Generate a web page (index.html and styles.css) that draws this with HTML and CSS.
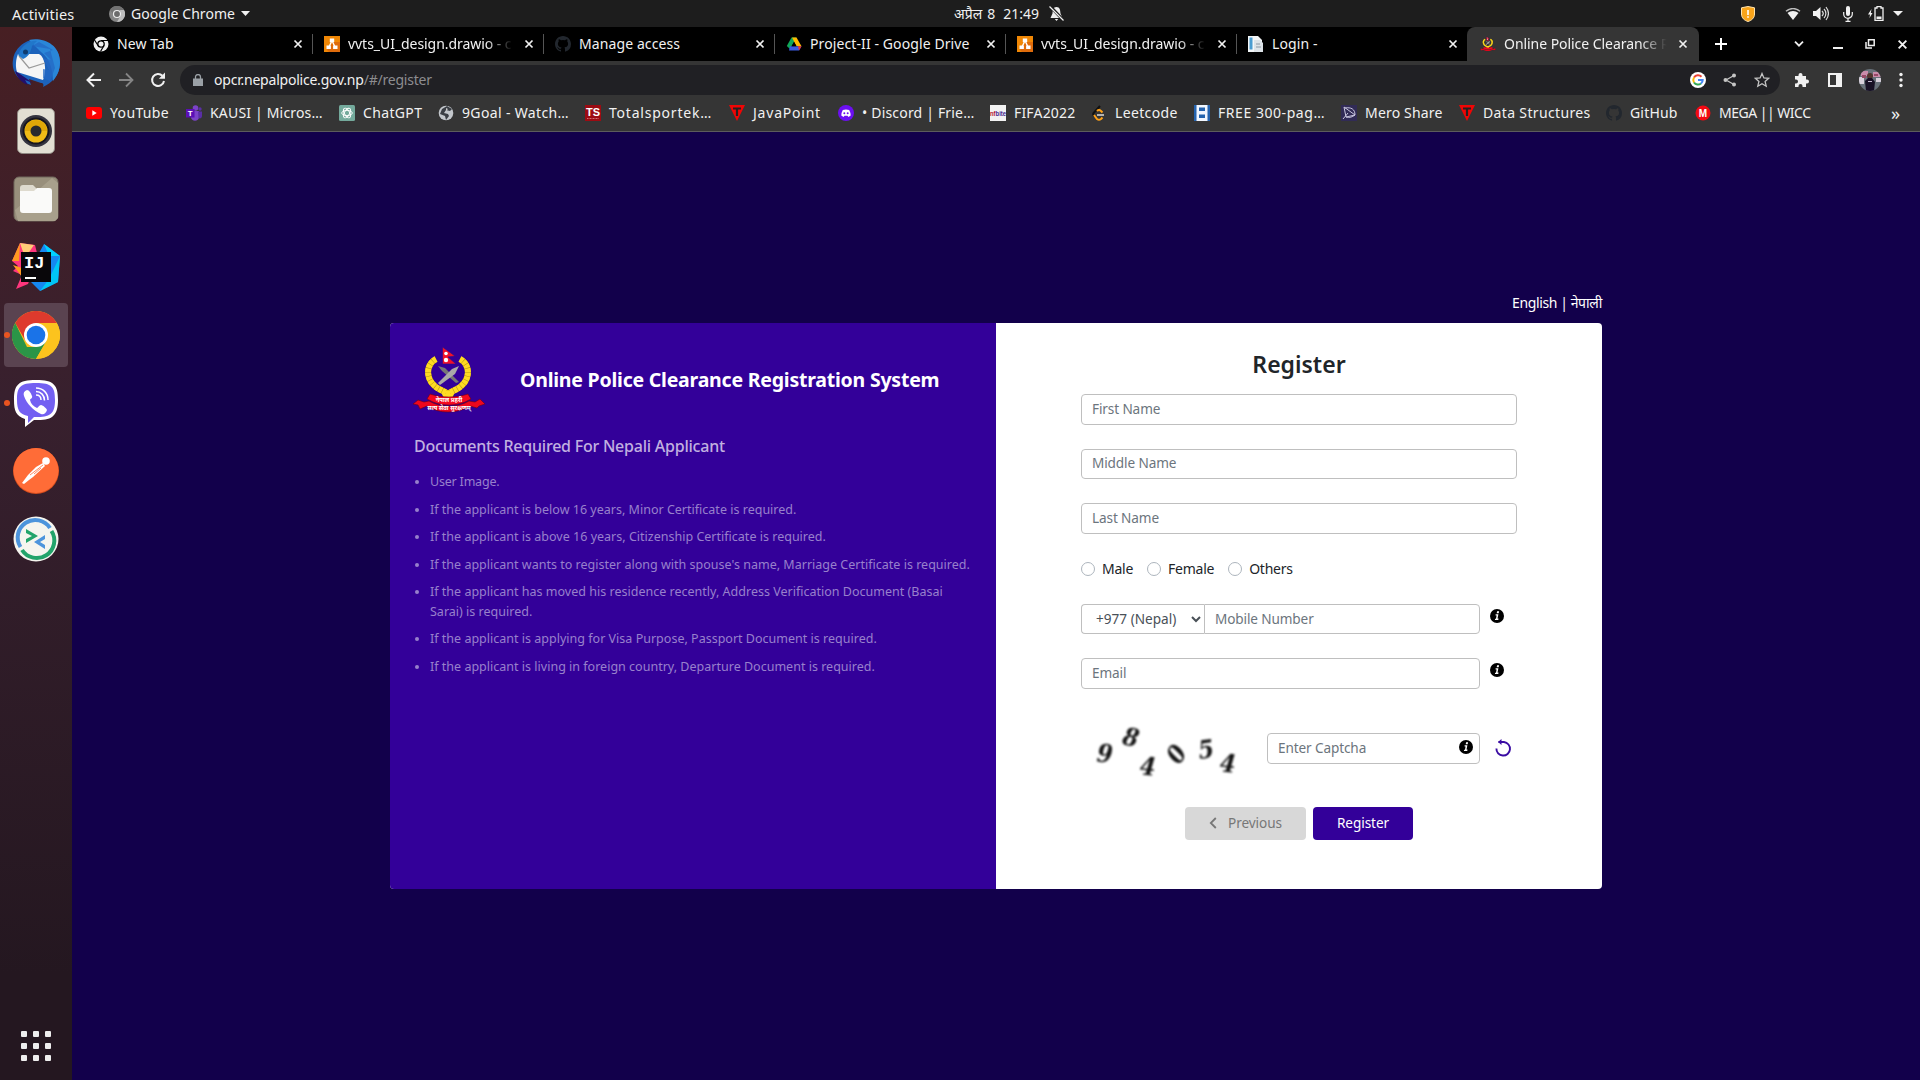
FILE: index.html
```html
<!DOCTYPE html>
<html lang="en">
<head>
<meta charset="utf-8">
<title>Online Police Clearance Registration System</title>
<link rel="stylesheet" href="styles.css">
</head>
<body>
<svg class="defs" width="0" height="0" aria-hidden="true">
  <symbol id="x" viewBox="0 0 10 10"><path d="M1.5 1.5l7 7M8.500 1.500l-7 7" stroke="#f1f1f1" stroke-width="1.700" fill="none"/></symbol>
  <symbol id="drawio" viewBox="0 0 16 16"><path fill="#f08705" d="M0 0h16v16H0z"/><path fill="#df6c0c" d="M16 6v10H5l-2-2 6-8z"/><path d="M8 4.500L5 11M8 4.500L11 11" stroke="#fff" stroke-width="1.400"/><path fill="#fff" d="M5.800 2.500h4.400v3.500H5.800zM2.500 9.500h4.400V13H2.500zM9.100 9.500h4.400V13H9.100z"/></symbol>
  <symbol id="github" viewBox="0 0 16 16"><path fill="#22272e" d="M8 0C3.580 0 0 3.580 0 8c0 3.540 2.290 6.530 5.470 7.590.4.070.550-.170.550-.380v-1.340c-2.230.480-2.700-1.070-2.700-1.070-.360-.930-.890-1.170-.890-1.170-.730-.500.050-.490.050-.490.800.060 1.230.830 1.230.830.710 1.220 1.870.870 2.330.660.070-.520.280-.870.500-1.070-1.780-.200-3.640-.890-3.640-3.950 0-.870.310-1.590.820-2.150-.080-.200-.360-1.020.080-2.120 0 0 .670-.210 2.200.820a7.600 7.600 0 014 0c1.530-1.040 2.200-.820 2.200-.820.440 1.100.160 1.920.080 2.120.510.560.820 1.270.820 2.150 0 3.070-1.870 3.750-3.650 3.950.290.250.540.730.540 1.480v2.190c0 .210.150.460.550.380A8 8 0 0016 8c0-4.420-3.580-8-8-8z"/></symbol>
  <symbol id="tpoint" viewBox="0 0 16 16"><path fill="#f00505" d="M0 0h16L8 16z"/><path fill="#222" d="M4 2.500h8v2H9.100V11H6.900V4.500H4z"/></symbol>
  <symbol id="info" viewBox="0 0 14 14"><circle cx="7" cy="7" r="7"/><path fill="#fff" d="M7.100 2.300h2l-.4 1.900h-2zM5.600 5.300h2.800l-.9 4.300h1l-.2 1.300H4.900l.2-1.200h.9l.600-3.200h-1z"/></symbol>
  <symbol id="emblem" viewBox="0 0 72 66">
    <path d="M23 12C12 18 12 34 26 42L40 49M47 12C58 18 58 34 44 42L30 49" fill="none" stroke="#b5960f" stroke-width="6"/>
    <path d="M23 12C12 18 12 34 26 42L40 49M47 12C58 18 58 34 44 42L30 49" fill="none" stroke="#ffdb22" stroke-width="6" stroke-dasharray="3.600 .5"/>
    <path d="M25 19l7 2 14 14-3 1-14-12z" fill="#777"/><path d="M46 19l-7 3-14 14 2 2 15-11z" fill="#aaa9a9"/>
    <path d="M29.500 0L42 9l-7 1 8 7H29.500z" fill="#f3102a" stroke="#25108a" stroke-width=".6"/><circle cx="33" cy="6.500" r="1.800" fill="#fff"/><circle cx="33" cy="13" r="2.200" fill="#fff"/>
    <path d="M0 57l5-4 6 2 5-1c12 7 28 7 40 0l6 1 5-3 5 5-6 2-2 2-7-2c-13 8-31 8-43 0l-7 3-2-4z" fill="#ee071d" stroke="#65001b" stroke-width=".6"/>
    <path d="M14 52l3-5c12 4 26 4 38 0l3 5-6 3c-10 4-22 4-32 0z" fill="#f5091f" stroke="#65001b" stroke-width=".6"/>
  </symbol>
</svg>

<header class="topbar">
  <span class="activities">Activities</span>
  <div class="appmenu">
    <svg width="16" height="16" viewBox="0 0 16 16"><circle cx="8" cy="8" r="8" fill="#858585"/><path d="M8 0a8 8 0 017 4H8L4 8 1 4a8 8 0 017-4z" fill="#737373"/><path d="M15 4a8 8 0 01-7 12l4-7-1-5z" fill="#bdbdbd"/><circle cx="8" cy="8" r="3.500" fill="#6b6b6b" stroke="#eee" stroke-width="1.200"/></svg>
    <span>Google Chrome</span>
    <svg width="9" height="5" viewBox="0 0 9 5"><path d="M0 0h9L4.500 5z" fill="#f1f1f1"/></svg>
  </div>
  <div class="clock"><span class="month">अप्रैल</span><span>8</span><span>21:49</span>
    <svg width="15" height="15" viewBox="0 0 15 15"><path d="M7.500 1C4 1 3.800 4 3.500 7.500L1.500 12h12l-2-4.500C11.200 4 11 1 7.500 1zM5.800 13h3.400L7.500 15z" fill="#eee"/><path d="M1 0l14 15" stroke="#1d1d1d" stroke-width="3"/><path d="M.5.500l14 14" stroke="#eee" stroke-width="1.200"/></svg>
  </div>
  <div class="tray">
    <svg class="shield" width="14" height="16" viewBox="0 0 14 16"><path d="M7 .5l6.500 1.300V8c0 4-3 6.500-6.500 7.500C3.500 14.500.5 12 .5 8V1.800z" fill="#f9a41a" stroke="#ffe4af"/><path d="M6.200 4h1.600v5H6.200zM6.200 10.300h1.600v1.500H6.200z" fill="#fff"/></svg>
    <svg class="wifi" width="16" height="12" viewBox="0 0 16 12"><path d="M1 3.300c4-3.600 10-3.600 14 0" fill="none" stroke="#bbb" stroke-width="1.500"/><path d="M2.500 5c3-2.700 8-2.700 11 0L8 12z" fill="#f1f1f1"/></svg>
    <svg class="sound" width="16" height="15" viewBox="0 0 16 15"><path d="M0 5h3l4.500-4v13L3 10H0z" fill="#f1f1f1"/><path d="M9 5c1.500 1.500 1.500 3.500 0 5M11 3c2.500 2.500 2.500 6.500 0 9M13 1c3 4 3 9 0 13" fill="none" stroke="#ddd" stroke-width="1.200"/></svg>
    <svg class="mic" width="10" height="16" viewBox="0 0 10 16"><rect x="3" y="0" width="4" height="10" rx="2" fill="#f1f1f1"/><path d="M.7 6v2a4.300 4.300 0 008.600 0V6M5 12v3M2.500 15.300h5" fill="none" stroke="#f1f1f1" stroke-width="1.200"/></svg>
    <svg class="batt" width="16" height="15" viewBox="0 0 16 15"><path d="M3.500 3L0 8.500h2L1.500 12 4.500 7H2.800z" fill="#f1f1f1"/><path d="M7 2h2V.7h4V2h2v12.300H7z" fill="none" stroke="#f1f1f1" stroke-width="1.300"/><path d="M8.500 10.500h5V13h-5z" fill="#f1f1f1"/></svg>
    <svg width="10" height="5" viewBox="0 0 10 5"><path d="M0 0h10L5 5z" fill="#f1f1f1"/></svg>
  </div>
</header>

<div class="desktop">
<nav class="dock">
  <div class="app"><svg width="48" height="48" viewBox="0 0 48 48"><path d="M14 3C24-2 48 2 48 24c0 12-8 20-17 24 1-3 0-4-2-4l-12-4 2 6C6 42-1 32 1 21 2 12 8 6 14 3z" fill="#1c62bb"/><path d="M17 1c12-3 31 3 31 22 0 8-3 14-7 19 0-8-2-22-12-29z" fill="#2a86d8"/><path d="M3 32c2 7 7 12 13 14l-3-5 8 3-16-11z" fill="#22106b"/><path d="M6 15h21c6 3 8 17 4 26L5 33C3 27 4 20 6 15z" fill="#f5f5f5"/><path d="M7 17l10 12 16-5" fill="none" stroke="#999" stroke-width="1.200"/><path d="M6 16C10 6 18 1 25 2l-5 5c-1 5-3 11-9 13z" fill="#2177ca"/><path d="M20 7l7-4 14 8-9 3 7 7-8-2 6 12-6-1 0 9 7 3 5-13-5-19z" fill="#2468c4" opacity=".75"/><circle cx="13.500" cy="13" r="2.500" fill="#103d70"/></svg></div>
  <div class="app"><svg width="48" height="48" viewBox="0 0 48 48"><rect x="5.500" y="1.500" width="37" height="45" rx="5" fill="#e2dfd3" stroke="#8f8982"/><circle cx="24" cy="24" r="16" fill="#34343f"/><circle cx="24" cy="24" r="13.500" fill="#16161f"/><circle cx="24" cy="24" r="11.500" fill="#efbb16"/><path d="M13 24a11 11 0 0122 0z" fill="#dea708"/><circle cx="24" cy="24" r="5.500" fill="#282b2e"/></svg></div>
  <div class="app"><svg width="48" height="48" viewBox="0 0 48 48"><rect x="2" y="2" width="44" height="44" rx="5" fill="#988f7c" stroke="#71685d"/><path d="M3 35L40 3l6 5v35l-3 3H6z" fill="#a8a08c"/><path d="M8 16v-3q0-3 3-3h10l4 4v6H8z" fill="#dedace"/><path d="M8 16h14l3-3h12q3 0 3 3v19q0 3-3 3H11q-3 0-3-3z" fill="#fafaf9"/></svg></div>
  <div class="app"><svg width="48" height="48" viewBox="0 0 48 48"><path d="M0 18L8 0l15 2 3 12-10 27-12 5 6-14-9-4 5-5z" fill="#ff367d"/><path d="M8 0l-1 18-7 0zM1 22l9 3v9z" fill="#ff9a20"/><path d="M8 0l14 2-9 13z" fill="#ffcc77"/><path d="M27 10l5-9 16 12-2 26-18 9-9-9z" fill="#1588f1"/><path d="M32 1l5 12 11 0z" fill="#00d2ff"/><path d="M37 36l11-23-2 26-18 9z" fill="#00c6f5"/><path d="M9 9h30v30H9zM13 34" fill="#09070a"/><path d="M13 34h11v2H13z" fill="#fff"/><text x="12" y="25" class="ij">IJ</text></svg></div>
  <div class="app running active"><svg width="48" height="48" viewBox="0 0 48 48"><circle cx="24" cy="24" r="24" fill="#fcc31e"/><path d="M3.200 12A24 24 0 0144.800 12H24L13.600 30z" fill="#de3a2d"/><path d="M3.200 12A24 24 0 0024 48l10.400-18L24 36H15z" fill="#2b9547"/><path d="M24 12h20.800A24 24 0 0124 48l10.400-18z" fill="#fcc31e"/><circle cx="24" cy="24" r="12" fill="#fff"/><circle cx="24" cy="24" r="9.300" fill="#1a73e8"/></svg></div>
  <div class="app running"><svg width="48" height="48" viewBox="0 0 48 48"><path d="M24 1C6 1 2 6 2 21c0 11 2 16 11 19v8l9-7c18 1 24-4 24-20C46 6 42 1 24 1z" fill="#fff"/><path d="M24 4C8 4 5 8 5 21c0 11 3 14 11 16v7l6-6c17 1 21-4 21-17C43 8 40 4 24 4z" fill="#7360f2"/><path d="M15 11c-3 1-4 3-3 6 3 8 9 14 17 18 3 1 5-1 6-4 0-1-4-5-6-5s-3 3-4 3c-4-2-6-4-7-8 0-1 3-2 2-4-1-3-3-6-5-6z" fill="#fff"/><path d="M24 16c3 0 5 2 5 5M24 12.500c5 0 8.500 4 8.500 9M24 9c7 0 12 5 12 12" fill="none" stroke="#fff" stroke-width="1.500"/></svg></div>
  <div class="app"><svg width="48" height="48" viewBox="0 0 48 48"><circle cx="24" cy="24" r="23" fill="#d64d1d"/><circle cx="24" cy="23.500" r="22.500" fill="#ff6c37"/><circle cx="34" cy="14" r="3.800" fill="#fff"/><path d="M31 16l2 3-12 11-4 3-5 4-2-1 6-8 8-8z" fill="#fff"/><path d="M18 28l13-10M22 27l7-6" stroke="#ff6c37" stroke-width=".8"/></svg></div>
  <div class="app"><svg width="48" height="48" viewBox="0 0 48 48"><circle cx="24" cy="24" r="22.500" fill="#f5f5ef"/><path d="M8.500 32A17.500 17.500 0 0138 13" fill="none" stroke="#4c94dc" stroke-width="4"/><path d="M39.500 16A17.500 17.500 0 0110 35" fill="none" stroke="#22a46b" stroke-width="4"/><path d="M14 14l12 7-12 7v-4l6-3-6-3z" fill="#22a46b"/><path d="M33 20v4l-5 3 5 3v4l-11-7z" fill="#4c94dc"/></svg></div>
  <div class="apps"><i></i><i></i><i></i><i></i><i></i><i></i><i></i><i></i><i></i></div>
</nav>

<div class="browser">
  <div class="tabs">
    <div class="tab"><svg width="16" height="16" viewBox="0 0 16 16"><circle cx="8" cy="8" r="7.500" fill="#f1f1f1"/><circle cx="8" cy="8" r="3.200" fill="#f1f1f1" stroke="#000" stroke-width="1.300"/><path d="M8 4.500h7M5 9.500L1.500 4M11 9.500L7.500 15.500" stroke="#000" stroke-width="1.200"/></svg><span class="tt">New Tab</span><svg class="cl" width="10" height="10"><use href="#x"/></svg></div>
    <div class="tab"><svg width="16" height="16"><use href="#drawio"/></svg><span class="tt fade">vvts_UI_design.drawio - c</span><svg class="cl" width="10" height="10"><use href="#x"/></svg></div>
    <div class="tab"><svg width="16" height="16"><use href="#github"/></svg><span class="tt">Manage access</span><svg class="cl" width="10" height="10"><use href="#x"/></svg></div>
    <div class="tab"><svg width="16" height="16" viewBox="0 0 16 16"><path fill="#10a758" d="M5.500 1.500h5L4 13 .8 10z"/><path fill="#ffba00" d="M6 1.500h4.500l5 8.800h-5z"/><path fill="#3b5be0" d="M4 10.300h11.500L13 14.500H3z"/><path fill="#e33" d="M12 10.300h3.500L13 14.500z"/><path d="M8 6l2.500 4.300h-5z"/></svg><span class="tt">Project-II - Google Drive</span><svg class="cl" width="10" height="10"><use href="#x"/></svg></div>
    <div class="tab"><svg width="16" height="16"><use href="#drawio"/></svg><span class="tt fade">vvts_UI_design.drawio - c</span><svg class="cl" width="10" height="10"><use href="#x"/></svg></div>
    <div class="tab"><svg width="16" height="16" viewBox="0 0 16 16"><path fill="#f3f6f8" d="M0 0h10l4 4v12H0z"/><path fill="#4a9cd0" d="M1.500 1.500h3v12h-3z"/><path fill="#dde3e8" d="M6 4h6l3 3v9H6z"/><path d="M8 8h4M8 11h5" stroke="#8a98a4"/></svg><span class="tt">Login -</span><svg class="cl" width="10" height="10"><use href="#x"/></svg></div>
    <div class="tab current"><svg width="16" height="16"><use href="#emblem"/></svg><span class="tt fade">Online Police Clearance R</span><svg class="cl" width="10" height="10"><use href="#x"/></svg></div>
    <svg class="plus" width="12" height="12" viewBox="0 0 12 12"><path d="M6 0v12M0 6h12" stroke="#fff" stroke-width="2"/></svg>
    <div class="win">
      <svg width="10" height="6" viewBox="0 0 10 6"><path d="M1 .7l4 4 4-4" stroke="#eee" stroke-width="1.800" fill="none"/></svg>
      <svg class="min" width="10" height="10" viewBox="0 0 10 10"><path d="M0 9h10" stroke="#eee" stroke-width="2"/></svg>
      <svg class="max" width="10" height="10" viewBox="0 0 10 10"><path d="M3.500.8h5.700v5.700H3.500zM1 3v6h6" stroke="#eee" stroke-width="1.500" fill="none"/></svg>
      <svg width="11" height="11"><use href="#x"/></svg>
    </div>
  </div>

  <div class="toolbar">
    <div class="navs">
      <svg width="16" height="16" viewBox="0 0 16 16"><path d="M15 8H2M8 1.500L1.500 8 8 14.500" stroke="#f1f1f1" stroke-width="2" fill="none"/></svg>
      <svg width="16" height="16" viewBox="0 0 16 16"><path d="M1 8h13M8 1.500L14.500 8 8 14.500" stroke="#858585" stroke-width="1.800" fill="none"/></svg>
      <svg width="16" height="16" viewBox="0 0 16 16"><path d="M14 9a6 6 0 11-1.600-5.200" stroke="#f1f1f1" stroke-width="2" fill="none"/><path d="M15 .5v6.200H8.800z" fill="#f1f1f1"/></svg>
    </div>
    <div class="omni">
      <svg class="lock" width="10" height="12" viewBox="0 0 10 12"><path d="M0 4.500h10V12H0z" fill="#9aa0a6"/><path d="M2.500 5V3a2.500 2.500 0 015 0v2" stroke="#9aa0a6" stroke-width="1.300" fill="none"/></svg>
      <span class="url"><b>opcr.nepalpolice.gov.np</b>/#/register</span>
      <svg width="16" height="16" viewBox="0 0 16 16"><circle cx="8" cy="8" r="8" fill="#fff"/><g fill="none" stroke-width="2"><path d="M11.500 4.700A4.800 4.800 0 004 5.500" stroke="#ea4335"/><path d="M4 5.500a4.800 4.800 0 000 5" stroke="#fbbc05"/><path d="M4 10.500a4.800 4.800 0 007 1" stroke="#34a853"/><path d="M11 11.500A4.500 4.500 0 0012.700 8H8" stroke="#4285f4"/></g></svg>
      <svg width="14" height="14" viewBox="0 0 14 14"><path d="M11 2.500L3 7l8 4.500" stroke="#c4c4c4" stroke-width="1.300" fill="none"/><circle cx="11" cy="2.500" r="2" fill="#c4c4c4"/><circle cx="2.500" cy="7" r="2" fill="#c4c4c4"/><circle cx="11" cy="11.500" r="2" fill="#c4c4c4"/></svg>
      <svg width="16" height="16" viewBox="0 0 16 16"><path d="M8 1.500l1.900 4.400 4.800.4-3.600 3.200 1.100 4.700L8 11.700l-4.200 2.500 1.100-4.700L1.300 6.300l4.800-.4z" stroke="#c4c4c4" stroke-width="1.300" fill="none"/></svg>
    </div>
    <div class="exts">
      <svg width="16" height="16" viewBox="0 0 16 16"><path d="M1 4h3.500V3a2 2 0 014 0v1H12v3.500h1a2 2 0 010 4h-1V15H8.500v-1a2 2 0 00-4 0v1H1v-3.500h1a2 2 0 000-4H1z" fill="#f1f1f1"/></svg>
      <svg width="14" height="14" viewBox="0 0 14 14"><path d="M1 1h12v12H1z" fill="none" stroke="#f1f1f1" stroke-width="2"/><path d="M8 1h5v12H8z" fill="#f1f1f1"/></svg>
      <svg width="22" height="22" viewBox="0 0 22 22"><clipPath id="av"><circle cx="11" cy="11" r="11"/></clipPath><g clip-path="url(#av)"><path fill="#68717a" d="M0 0h22v22H0z"/><path fill="#c98cab" d="M2 2h7v5H2zM14 3h8v5h-8z"/><path fill="#d8d1dc" d="M0 8h5v7H0zM17 9h5v4h-5z"/><path fill="#974968" d="M3 6h4v3H3zM15 5h4v2h-4z"/><circle cx="11" cy="7" r="3" fill="#51352e"/><path d="M6 12l3-3h4l3 4-1 9H7z" fill="#171024"/><path d="M9 12h4v1H9z" fill="#c5b8d0"/></g></svg>
      <svg width="4" height="16" viewBox="0 0 4 16"><circle cx="2" cy="2.500" r="1.700" fill="#f1f1f1"/><circle cx="2" cy="8" r="1.700" fill="#f1f1f1"/><circle cx="2" cy="13.500" r="1.700" fill="#f1f1f1"/></svg>
    </div>
  </div>

  <div class="marks">
    <a><svg width="16" height="16" viewBox="0 0 16 16"><rect y="2" width="16" height="12" rx="3" fill="#f00"/><path d="M6.300 5.300v5.400L10.700 8z" fill="#fff"/></svg><span>YouTube</span></a>
    <a class="snug"><svg width="16" height="16" viewBox="0 0 16 16"><circle cx="9.500" cy="3" r="2.800" fill="#7b42c8"/><circle cx="14" cy="4" r="1.700" fill="#5a2ea6"/><path d="M5 6h8v6c0 5-8 5-8 0z" fill="#7b42c8"/><path d="M12 6.500h4V11c0 2-2 3-3.500 2z" fill="#5a2ea6"/><path d="M0 4h8.500v8.500H0z" fill="#5b0fb5"/><text x="4.300" y="11" text-anchor="middle" class="teams">T</text></svg><span>KAUSI | Micros…</span></a>
    <a><svg width="16" height="16" viewBox="0 0 16 16"><rect width="16" height="16" rx="1.500" fill="#74aa9c"/><g fill="none" stroke="#fff" stroke-width=".9"><ellipse cx="8" cy="8" rx="5.300" ry="2.600"/><ellipse cx="8" cy="8" rx="5.300" ry="2.600" transform="rotate(60 8 8)"/><ellipse cx="8" cy="8" rx="5.300" ry="2.600" transform="rotate(120 8 8)"/></g></svg><span>ChatGPT</span></a>
    <a><svg width="16" height="16" viewBox="0 0 16 16"><circle cx="8" cy="8" r="7.300" fill="#c3c7cc"/><path d="M9 1l5 3-2 2-4-1-2 3 4 1 1 2-3 4-1-4-5-2 2-5z" fill="#3b3f45"/><path d="M8 3l2 1-2 2z" fill="#ccc"/></svg><span>9Goal - Watch…</span></a>
    <a class="loose"><svg width="16" height="16" viewBox="0 0 16 16"><path fill="#9c0b12" d="M0 0h16v16H0z"/><text x="8" y="11" text-anchor="middle" class="ts">TS</text><path d="M2 13.500h12" stroke="#d6696d" stroke-dasharray="1 .5"/></svg><span>Totalsportek…</span></a>
    <a class="loose"><svg width="16" height="16"><use href="#tpoint"/></svg><span>JavaPoint</span></a>
    <a class="snug"><svg width="16" height="16" viewBox="0 0 16 16"><circle cx="8" cy="8" r="8" fill="#6c0ff2"/><path d="M4.800 5q3.200-1 6.400 0 1.600 3 1.500 5.500L10.500 12l-1-1.200h-3L5.500 12l-2.200-1.500Q3.200 8 4.800 5z" fill="#fff"/><circle cx="6.300" cy="8.300" r="1" fill="#6c0ff2"/><circle cx="9.700" cy="8.300" r="1" fill="#6c0ff2"/></svg><span>• Discord | Frie…</span></a>
    <a class="snug"><svg width="16" height="16" viewBox="0 0 16 16"><path fill="#f2f2f2" d="M0 0h16v16H0z"/><text x="0" y="10.500" textLength="16" lengthAdjust="spacingAndGlyphs" class="nf"><tspan fill="#b3122f">nf</tspan><tspan fill="#43258c">bite</tspan></text></svg><span>FIFA2022</span></a>
    <a><svg width="16" height="16" viewBox="0 0 16 16"><path d="M9 1L3 7.500q-1.500 1.500 0 3.500" stroke="#111" stroke-width="2" fill="none"/><path d="M3 10l3 4q2 1.500 4 0l1.500-1.500M6 6q2-2 4 0l1.500 1.500" stroke="#ffa116" stroke-width="2" fill="none"/><path d="M6 10h7" stroke="#b3b3b3" stroke-width="2"/></svg><span>Leetcode</span></a>
    <a class="wide"><svg width="16" height="16" viewBox="0 0 16 16"><path fill="#f2f7ff" d="M0 0h16v16H0z"/><path fill="#2463ae" d="M0 0h2.500v16H0zM13.500 0H16v16h-2.500zM5 2.500h6v3.500H5zM5 9.500h6v3.500H5z"/></svg><span>FREE 300-pag…</span></a>
    <a class="snug"><svg width="16" height="16" viewBox="0 0 16 16"><path fill="#312b56" d="M0 0h16v16H0z"/><path d="M3 2l11 8-9 2zM2 14l5-6M4 3c6-1 10 1 10 7M5 12c4 1 6 0 9-2" fill="none" stroke="#c8c5de"/></svg><span>Mero Share</span></a>
    <a><svg width="16" height="16"><use href="#tpoint"/></svg><span>Data Structures</span></a>
    <a class="snug"><svg width="16" height="16"><use href="#github"/></svg><span>GitHub</span></a>
    <a class="tight"><svg width="16" height="16" viewBox="0 0 16 16"><circle cx="8" cy="8" r="7.500" fill="#f20a13"/><text x="8" y="11.500" text-anchor="middle" class="mega">M</text></svg><span>MEGA || WICC</span></a>
    <span class="more">»</span>
  </div>

  <main class="page">
    <div class="wrap">
      <div class="lang">English | नेपाली</div>
      <div class="panel">
        <section class="docs">
          <div class="brand">
            <svg width="72" height="66" viewBox="0 0 72 66"><use href="#emblem"/><text x="36" y="55" text-anchor="middle" class="ribbon">नेपाल प्रहरी</text><text x="36" y="63" text-anchor="middle" class="ribbon">सत्य सेवा सुरक्षणम्</text></svg>
            <h1>Online Police Clearance Registration System</h1>
          </div>
          <h2>Documents Required For Nepali Applicant</h2>
          <ul>
            <li>User Image.</li>
            <li>If the applicant is below 16 years, Minor Certificate is required.</li>
            <li>If the applicant is above 16 years, Citizenship Certificate is required.</li>
            <li>If the applicant wants to register along with spouse's name, Marriage Certificate is required.</li>
            <li>If the applicant has moved his residence recently, Address Verification Document (Basai<br>Sarai) is required.</li>
            <li>If the applicant is applying for Visa Purpose, Passport Document is required.</li>
            <li>If the applicant is living in foreign country, Departure Document is required.</li>
          </ul>
        </section>
        <form class="form">
          <h3>Register</h3>
          <input class="field" placeholder="First Name">
          <input class="field" placeholder="Middle Name">
          <input class="field" placeholder="Last Name">
          <div class="radios">
            <label><input type="radio" name="gender">Male</label>
            <label><input type="radio" name="gender">Female</label>
            <label><input type="radio" name="gender">Others</label>
          </div>
          <div class="row">
            <div class="phone"><select class="code"><option>+977 (Nepal)</option></select><input class="field" placeholder="Mobile Number"></div>
            <svg class="hint" width="14" height="14"><use href="#info"/></svg>
          </div>
          <div class="row"><input class="field" placeholder="Email"><svg class="hint" width="14" height="14"><use href="#info"/></svg></div>
          <div class="row captcha">
            <svg class="digits" width="186" height="64" viewBox="0 0 186 64">
              <text x="24" y="46" transform="rotate(6 24 37)">9</text><text x="50" y="30" transform="rotate(14 50 21)">8</text><text x="67" y="59" transform="rotate(6 67 50)">4</text><text x="95" y="47" transform="rotate(-55 95 38)">0</text><text x="125" y="42" transform="rotate(-8 125 33)">5</text><text x="147" y="56" transform="rotate(6 147 47)">4</text>
            </svg>
            <div class="capfield"><input class="field" placeholder="Enter Captcha"><svg class="inside" width="14" height="14"><use href="#info"/></svg></div>
            <svg class="reload" width="17" height="18" viewBox="0 0 17 18"><path d="M3.500 3H9a6.800 6.800 0 11-7.600 6.500" fill="none" stroke="#3a0ca3" stroke-width="1.900"/><path d="M6.500 0v6L3 3z" fill="#3a0ca3"/></svg>
          </div>
          <div class="actions">
            <button type="button" class="prev" disabled><svg width="8" height="12" viewBox="0 0 8 12"><path d="M6.800 1L1.800 6l5 5" stroke="#777" stroke-width="1.800" fill="none"/></svg><span>Previous</span></button>
            <button type="button" class="go"><span>Register</span></button>
          </div>
        </form>
      </div>
    </div>
  </main>
</div>
</div>
</body>
</html>
```
FILE: styles.css
```css
* { box-sizing: border-box; }
body { margin: 0; width: 1920px; height: 1080px; overflow: hidden; font: 14px/20px "Noto Sans", "Open Sans", sans-serif; color: #f1f1f1; background: #12004b; }
svg { display: block; flex: none; }
.defs { position: absolute; }
.ribbon { font: bold 6px/1 "Noto Sans", sans-serif; fill: #fff; letter-spacing: 0; }
.ts { font: bold 11px "Liberation Sans", sans-serif; fill: #fff; letter-spacing: 0; }
.nf { font: bold 8px "Liberation Sans", sans-serif; letter-spacing: 0; }
.teams { font: bold 8px "Liberation Sans", sans-serif; fill: #fff; letter-spacing: 0; }
.mega { font: bold 10px "Liberation Sans", sans-serif; fill: #fff; letter-spacing: 0; }
.ij { font: bold 17px "Liberation Mono", monospace; fill: #fff; }

.topbar { height: 27px; background: #1d1d1d; display: grid; grid-template-columns: 109px 845px 787px 1fr; align-items: center; line-height: 26px; }
.activities { padding-left: 12px; font-size: 14.500px; letter-spacing: .2px; }
.appmenu, .clock, .tray { display: flex; align-items: center; }
.appmenu { gap: 6px; letter-spacing: .05px; }
.clock { gap: 8px; }
.month { margin-right: -3px; }
.clock svg { margin-left: 2px; }
.wifi { margin-left: 30px; }
.sound { margin-left: 12px; }
.mic { margin-left: 14px; }
.batt { margin: 0 9px 0 15px; }

.desktop { display: flex; height: 1053px; }
.dock { width: 72px; display: flex; flex-direction: column; align-items: center; gap: 4px; padding: 4px 0 19px; background: linear-gradient(#471f23, #38202e 35%, #241720 90%); }
.app { width: 64px; height: 64px; border-radius: 4px; display: grid; place-items: center; position: relative; }
.app.active { background: #5a4350; }
.running::before { content: ""; position: absolute; left: 0; top: 29px; width: 6px; height: 6px; border-radius: 50%; background: #e95420; }
.apps { margin-top: auto; display: grid; grid-template-columns: repeat(3, 6px); gap: 6px; }
.apps i { height: 6px; border-radius: 1px; background: #eee; }

.browser { flex: 1; display: flex; flex-direction: column; }
.tabs { height: 34px; background: #000; display: flex; align-items: center; padding: 0 12px 0 9px; }
.tab { width: 231px; height: 34px; display: flex; align-items: center; gap: 8px; padding: 0 10px 0 12px; }
.tab::after { content: ""; width: 1px; height: 20px; background: #555; margin-right: -11px; margin-left: 1px; }
.tab:nth-child(6)::after, .current::after { background: none; }
.tt { flex: 1; overflow: hidden; white-space: nowrap; letter-spacing: .1px; }
.fade { letter-spacing: -.05px; -webkit-mask-image: linear-gradient(90deg, #000 82%, transparent 98%); mask-image: linear-gradient(90deg, #000 82%, transparent 98%); }
.current { background: #353535; border-radius: 8px 8px 0 0; width: 232px; padding-left: 13px; padding-right: 12px; }
.plus { margin-left: 16px; }
.win { margin-left: auto; display: flex; align-items: center; }
.min { margin-left: 29px; }
.max { margin: 0 22px; }

.toolbar { height: 38px; background: #353535; display: flex; align-items: center; }
.navs { display: flex; gap: 16px; padding-left: 14px; width: 108px; }
.omni { width: 1600px; height: 30px; border-radius: 15px; background: #202024; display: flex; align-items: center; padding: 0 10px 0 13px; gap: 17px; }
.url { flex: 1; color: #8d8d90; margin-left: -6px; letter-spacing: -.22px; }
.url b { font-weight: 400; color: #f1f1f1; }
.exts { display: flex; align-items: center; gap: 17.500px; padding-left: 14px; }

.marks { height: 33px; background: #353535; border-bottom: 1px solid #5c5c5c; display: grid; grid-template-columns: 100px 153px 99px 147px 144px 109px 152px 101px 103px 147px 118px 147px 89px 196px 1fr; align-items: center; padding: 0 0 4px 14px; }
.marks a { display: flex; align-items: center; gap: 8px; white-space: nowrap; letter-spacing: .35px; }
.marks .snug { letter-spacing: .18px; }
.marks .wide { letter-spacing: .55px; }
.marks .loose { letter-spacing: .78px; }
.marks .tight { letter-spacing: -.5px; }
.more { font-size: 18px; }

.page { flex: 1; background: #12004b; }
.wrap { width: 1212px; margin: 0 auto; padding-top: 161px; }
.lang { text-align: right; color: #fff; height: 30px; letter-spacing: -.4px; }
.panel { display: grid; grid-template-columns: 1fr 1fr; height: 566px; border-radius: 4px; overflow: hidden; background: #fff; }
.docs { background: #330099; padding: 23px 24px; }
.brand { display: flex; align-items: center; gap: 35px; height: 67px; margin-left: -1px; }
h1, h2, h3 { margin: 0; font-weight: 500; white-space: nowrap; }
h1 { font-size: 19.500px; font-weight: 700; letter-spacing: -.22px; color: #fff; line-height: 24px; }
h2 { font-size: 16px; line-height: 20px; letter-spacing: -.23px; color: #c1b0e0; margin-top: 23px; }
ul { margin: 16px 0 0; padding: 0 0 0 16px; font-size: 12.500px; line-height: 19.500px; letter-spacing: .01px; color: #9880cc; white-space: nowrap; }
li { margin-bottom: 8px; }
li:first-child { letter-spacing: -.2px; }

.form { padding: 27px 85px 0; color: #212529; display: flex; flex-direction: column; }
h3 { font-size: 23px; font-weight: 600; line-height: 28px; text-align: center; margin-bottom: 16px; }
.field { display: block; width: 100%; height: 30.600px; flex: none; border: 1px solid #bfbfbf; border-radius: 4px; padding: 0 10px 2px; font: 13.600px "Noto Sans", sans-serif; letter-spacing: -.12px; color: #495057; background: #fff; margin: 0 0 24px; }
.field::placeholder { color: #6c757d; opacity: 1; }
.radios { display: flex; gap: 14px; height: 20px; margin: 1px 0 25px; letter-spacing: -.25px; }
.radios label { display: flex; gap: 7px; align-items: center; }
.radios input { appearance: none; width: 14px; height: 14px; border: 1px solid #adb5bd; border-radius: 50%; margin: 0; }
.row { display: flex; }
.phone { display: flex; width: 399px; }
.code { flex: none; width: 123px; height: 30.600px; border: 1px solid #bfbfbf; border-right: 0; border-radius: 4px 0 0 4px; background: #fff; color: #495057; font: 13.600px "Noto Sans", sans-serif; padding: 0 0 2px 10px; }
.phone .field { flex: 1; min-width: 0; border-radius: 0 4px 4px 0; }
.row > .field { width: 399px; }
.hint { margin: 5px 0 0 10px; }
.captcha { margin-top: 3px; height: 64px; align-items: flex-start; }
.digits text { font: italic bold 25px "DejaVu Serif Condensed", "DejaVu Serif", serif; font-stretch: condensed; fill: #111; text-anchor: middle; }
.digits { filter: blur(.8px); }
.capfield { width: 213px; margin-top: 17px; position: relative; }
.inside { position: absolute; right: 7px; top: 7px; }
.reload { margin: 23px 0 0 15px; }
.actions { display: flex; justify-content: center; gap: 7px; margin-top: 27px; }
.actions button { height: 33px; border: 0; border-radius: 4px; font: 13.600px "Noto Sans", sans-serif; letter-spacing: -.08px; display: flex; align-items: center; justify-content: center; gap: 11px; padding: 0 0 1px; }
.prev { width: 121px; background: #d8d8d8; color: #777; }
.go { width: 100px; background: #330099; color: #fff; }
```
